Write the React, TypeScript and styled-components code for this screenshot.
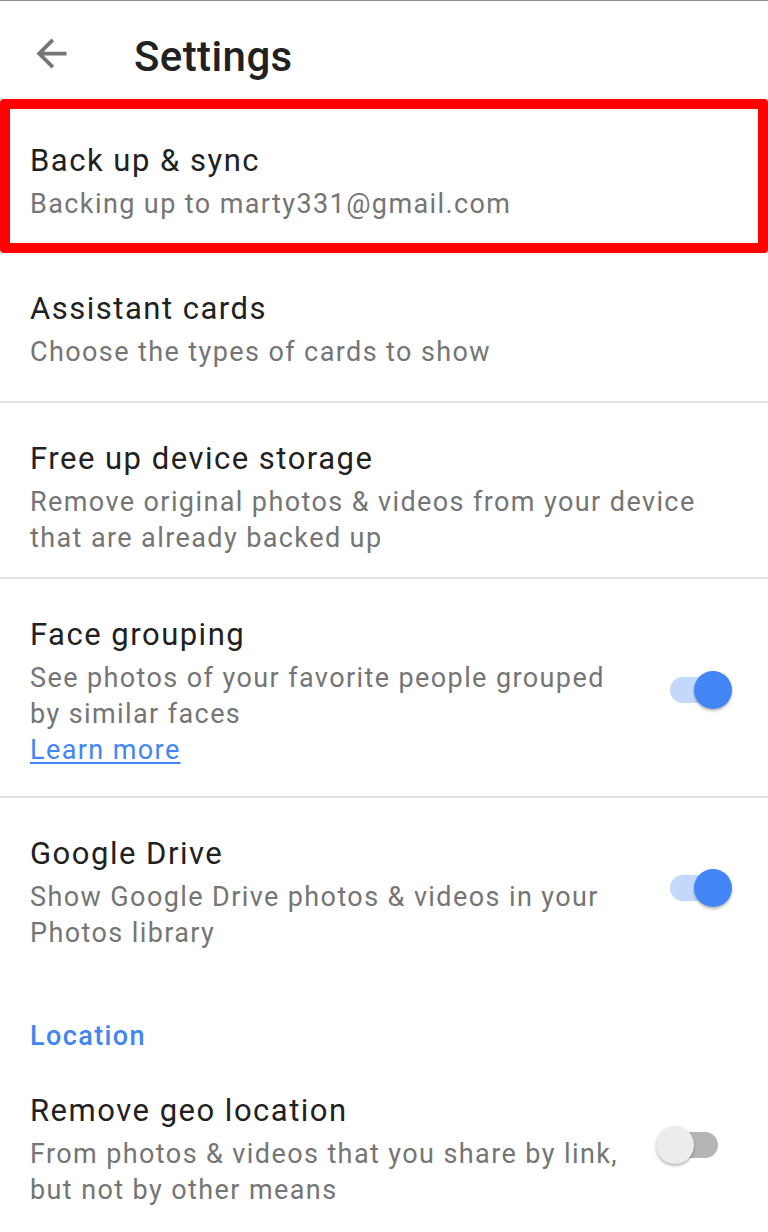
import styled, { createGlobalStyle } from "styled-components";

const GlobalStyle = createGlobalStyle`
  html, body {
    margin: 0;
    padding: 0;
    background: #ffffff;
  }
  body {
    font-family: Roboto, "Noto Sans", "Liberation Sans", sans-serif;
    -webkit-font-smoothing: antialiased;
  }
`;

const Page = styled.div`
  width: 768px;
  min-height: 1232px;
  border-top: 1px solid #8a8a8a;
  box-sizing: border-box;
  overflow: hidden;
`;

const Header = styled.div`
  display: flex;
  align-items: flex-start;
  height: 98px;
  padding-left: 29px;
`;

const BackButton = styled.svg`
  width: 45px;
  height: 45px;
  margin-top: 30px;
  fill: #757575;
`;

const Title = styled.h1`
  margin: 28px 0 0 60px;
  font-size: 42px;
  line-height: 56px;
  font-weight: 500;
  letter-spacing: 0.4px;
  color: #212121;
`;

const Highlight = styled.div`
  border: 10px solid #ff0000;
  border-radius: 4px;
  height: 154px;
  box-sizing: border-box;
  padding: 28px 20px 0;
`;

const Row = styled.div<{ $divider?: boolean; $minHeight?: number }>`
  display: flex;
  align-items: center;
  gap: 20px;
  padding: 32px 36px 21px 30px;
  min-height: ${(p) => (p.$minHeight ? `${p.$minHeight}px` : "auto")};
  box-sizing: border-box;
  border-bottom: ${(p) => (p.$divider ? "2px solid #e0e0e0" : "none")};
`;

const TextBlock = styled.div`
  flex: 1;
  min-width: 0;
  align-self: flex-start;
`;

const ItemTitle = styled.div`
  font-size: 31px;
  line-height: 48px;
  letter-spacing: 1.5px;
  color: #212121;
`;

const ItemSub = styled.div`
  margin-top: 1px;
  font-size: 27px;
  line-height: 36px;
  letter-spacing: 1.4px;
  color: #757575;
`;

const Link = styled.a`
  display: inline-block;
  margin-bottom: 7px;
  color: #4285f4;
  text-decoration: underline;
  text-underline-offset: 3px;
`;

const Category = styled.div`
  padding: 46px 30px 1px;
  font-size: 27px;
  line-height: 36px;
  font-weight: 500;
  letter-spacing: 1.4px;
  color: #4285f4;
`;

const Switch = styled.div`
  position: relative;
  flex: none;
  width: 76px;
  height: 38px;
  margin-bottom: 6px;
`;

const Track = styled.div<{ $on?: boolean }>`
  position: absolute;
  left: 14px;
  top: 6px;
  width: 48px;
  height: 26px;
  border-radius: 13px;
  background: ${(p) => (p.$on ? "#c3d8fb" : "#b5b5b5")};
`;

const Thumb = styled.div<{ $on?: boolean }>`
  position: absolute;
  top: 0;
  left: ${(p) => (p.$on ? "38px" : "0")};
  width: 38px;
  height: 38px;
  border-radius: 50%;
  background: ${(p) => (p.$on ? "#4285f4" : "#ececec")};
  box-shadow: 0 2px 3px rgba(0, 0, 0, 0.28);
`;

const Toggle = ({ on }: { on?: boolean }) => (
  <Switch>
    <Track $on={on} />
    <Thumb $on={on} />
  </Switch>
);

export default function App() {
  return (
    <Page>
      <GlobalStyle />
      <Header>
        <BackButton viewBox="0 0 24 24">
          <path d="M20 11H7.83l5.59-5.59L12 4l-8 8 8 8 1.41-1.41L7.83 13H20v-2z" />
        </BackButton>
        <Title>Settings</Title>
      </Header>

      <Highlight>
        <ItemTitle>Back up &amp; sync</ItemTitle>
        <ItemSub>Backing up to marty331@gmail.com</ItemSub>
      </Highlight>

      <Row $divider $minHeight={150}>
        <TextBlock>
          <ItemTitle>Assistant cards</ItemTitle>
          <ItemSub>Choose the types of cards to show</ItemSub>
        </TextBlock>
      </Row>

      <Row $divider>
        <TextBlock>
          <ItemTitle>Free up device storage</ItemTitle>
          <ItemSub>
            Remove original photos &amp; videos from your device that are already backed up
          </ItemSub>
        </TextBlock>
      </Row>

      <Row $divider>
        <TextBlock>
          <ItemTitle>Face grouping</ItemTitle>
          <ItemSub>
            See photos of your favorite people grouped by similar faces
            <br />
            <Link>Learn more</Link>
          </ItemSub>
        </TextBlock>
        <Toggle on />
      </Row>

      <Row>
        <TextBlock>
          <ItemTitle>Google Drive</ItemTitle>
          <ItemSub>Show Google Drive photos &amp; videos in your Photos library</ItemSub>
        </TextBlock>
        <Toggle on />
      </Row>

      <Category>Location</Category>

      <Row>
        <TextBlock>
          <ItemTitle>Remove geo location</ItemTitle>
          <ItemSub>From photos &amp; videos that you share by link, but not by other means</ItemSub>
        </TextBlock>
        <Toggle />
      </Row>
    </Page>
  );
}
